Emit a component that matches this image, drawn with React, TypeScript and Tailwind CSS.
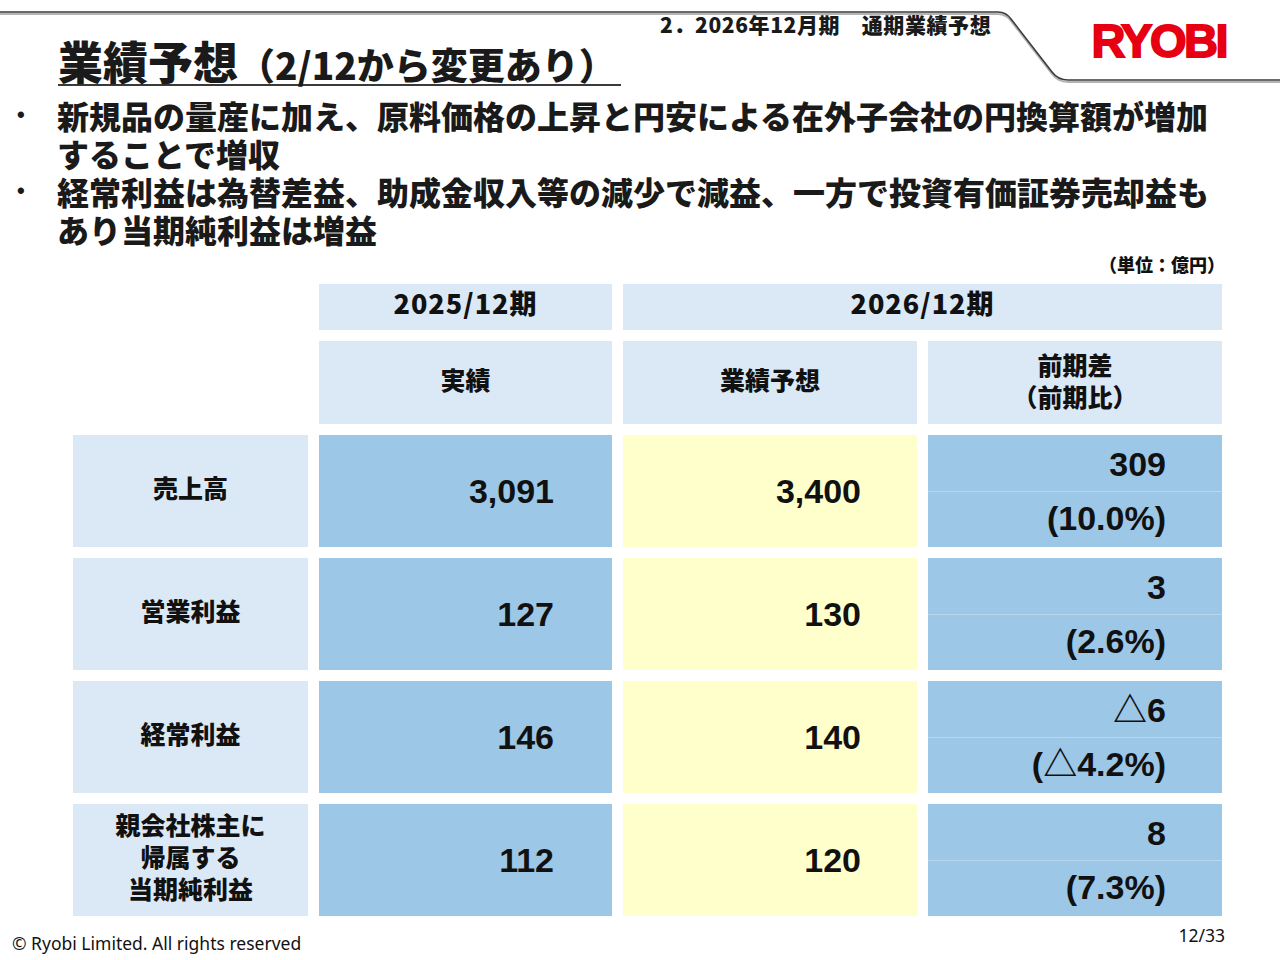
import React from "react";

const jp = "font-['Noto_Sans_CJK_JP','Noto_Sans_CJK_SC',sans-serif]";
const num = "font-['Liberation_Sans','Noto_Sans_CJK_JP',Arial,sans-serif]";

type Row = {
  label: string[];
  prev: string;
  plan: string;
  diff: string;
  ratio: string;
};

const rows: Row[] = [
  { label: ["売上高"], prev: "3,091", plan: "3,400", diff: "309", ratio: "(10.0%)" },
  { label: ["営業利益"], prev: "127", plan: "130", diff: "3", ratio: "(2.6%)" },
  { label: ["経常利益"], prev: "146", plan: "140", diff: "△6", ratio: "(△4.2%)" },
  { label: ["親会社株主に", "帰属する", "当期純利益"], prev: "112", plan: "120", diff: "8", ratio: "(7.3%)" },
];

function HeaderLine() {
  return (
    <svg className="absolute left-0 top-0" width="1280" height="92" viewBox="0 0 1280 92">
      <path
        d="M0 14 H 998 Q 1006 14 1011 21 L 1052 74 Q 1058 82 1068 82 H 1280"
        fill="none"
        stroke="#b4b4b4"
        strokeWidth="2"
      />
      <path
        d="M0 12 H 998 Q 1006 12 1011 19 L 1052 72 Q 1058 80 1068 80 H 1280"
        fill="none"
        stroke="#3a3a3a"
        strokeWidth="1.6"
      />
    </svg>
  );
}

export default function App() {
  return (
    <div className={`w-[1280px] h-[960px] bg-white text-[#111] overflow-hidden ${jp}`}>
      {/* Header */}
      <div className="relative h-[92px] flex items-start">
        <HeaderLine />
        <div className="relative ml-[58px] mt-[38px] w-[563px] border-b-2 border-[#3a3a3a] flex items-baseline font-black text-[#1a1a1a] leading-none pb-[1px]">
          <span className="text-[45px]">業績予想</span>
          <span className="text-[37px]">（2/12から変更あり）</span>
        </div>
        <div className="relative ml-[39px] mt-[14px] text-[21px] font-black leading-none tracking-[0.6px] text-[#1a1a1a] whitespace-nowrap">
          2．2026年12月期　通期業績予想
        </div>
        <div
          className={`relative ml-auto mr-[54px] mt-[17px] text-[47px] font-bold leading-none tracking-[-2.5px] text-[#e60012] ${num} [-webkit-text-stroke:1.8px_#e60012]`}
        >
          RYOBI
        </div>
      </div>

      {/* Bullets */}
      <div className="mt-[4px] text-[32px] font-black leading-[38px] text-[#1a1a1a]">
        <div className="flex">
          <span className={`w-[57px] pl-[17px] text-[22px] ${num}`}>•</span>
          <div className="whitespace-nowrap">
            <div>新規品の量産に加え、原料価格の上昇と円安による在外子会社の円換算額が増加</div>
            <div>することで増収</div>
          </div>
        </div>
        <div className="flex">
          <span className={`w-[57px] pl-[17px] text-[22px] ${num}`}>•</span>
          <div className="whitespace-nowrap">
            <div>経常利益は為替差益、助成金収入等の減少で減益、一方で投資有価証券売却益も</div>
            <div>あり当期純利益は増益</div>
          </div>
        </div>
      </div>

      {/* Unit */}
      <div className="mt-[2px] pr-[55px] text-right text-[18px] font-black leading-[28px]">（単位：億円）</div>

      {/* Table */}
      <div className="mt-[6px] ml-[73px] grid grid-cols-[235px_293px_294px_294px] gap-x-[11px] gap-y-[11px] grid-rows-[46px_83px_112px_112px_112px_112px]">
        <div />
        <div className="bg-[#dbe9f6] flex items-center justify-center pb-[8px] text-[27px] font-black tracking-[1px]">
          2025/12期
        </div>
        <div className="col-span-2 bg-[#dbe9f6] flex items-center justify-center pb-[8px] text-[27px] font-black tracking-[1px]">
          2026/12期
        </div>

        <div />
        <div className="bg-[#dbe9f6] flex items-center justify-center pb-[5px] text-[25px] font-black">実績</div>
        <div className="bg-[#dbe9f6] flex items-center justify-center pb-[5px] text-[25px] font-black">業績予想</div>
        <div className="bg-[#dbe9f6] flex flex-col items-center justify-center pb-[5px] text-[25px] font-black leading-[32px]">
          <span>前期差</span>
          <span>（前期比）</span>
        </div>

        {rows.map((r, i) => (
          <React.Fragment key={i}>
            <div className="bg-[#dbe9f6] flex flex-col items-center justify-center pb-[8px] text-[25px] font-black leading-[32px]">
              {r.label.map((l) => (
                <span key={l}>{l}</span>
              ))}
            </div>
            <div className={`bg-[#9dc7e6] flex items-center justify-end pr-[58px] text-[34px] font-bold leading-none ${num}`}>
              {r.prev}
            </div>
            <div className={`bg-[#ffffcc] flex items-center justify-end pr-[56px] text-[34px] font-bold leading-none ${num}`}>
              {r.plan}
            </div>
            <div className={`bg-[#9dc7e6] flex flex-col text-[34px] font-bold leading-none ${num}`}>
              <div className="flex-1 flex items-center justify-end pr-[56px] pt-[2px] border-b border-[#b9d8ef]">
                {r.diff}
              </div>
              <div className="flex-1 flex items-center justify-end pr-[56px] pb-[2px]">{r.ratio}</div>
            </div>
          </React.Fragment>
        ))}
      </div>

      {/* Footer */}
      <div className="flex items-start justify-between">
        <div className="ml-[12px] mt-[16px] text-[17.5px] leading-[22px] font-['Noto_Sans',sans-serif] text-[#111]">
          © Ryobi Limited. All rights reserved
        </div>
        <div className="mr-[55px] mt-[8px] text-[17.5px] leading-[22px] font-['Noto_Sans',sans-serif] text-[#111]">
          12/33
        </div>
      </div>
    </div>
  );
}
